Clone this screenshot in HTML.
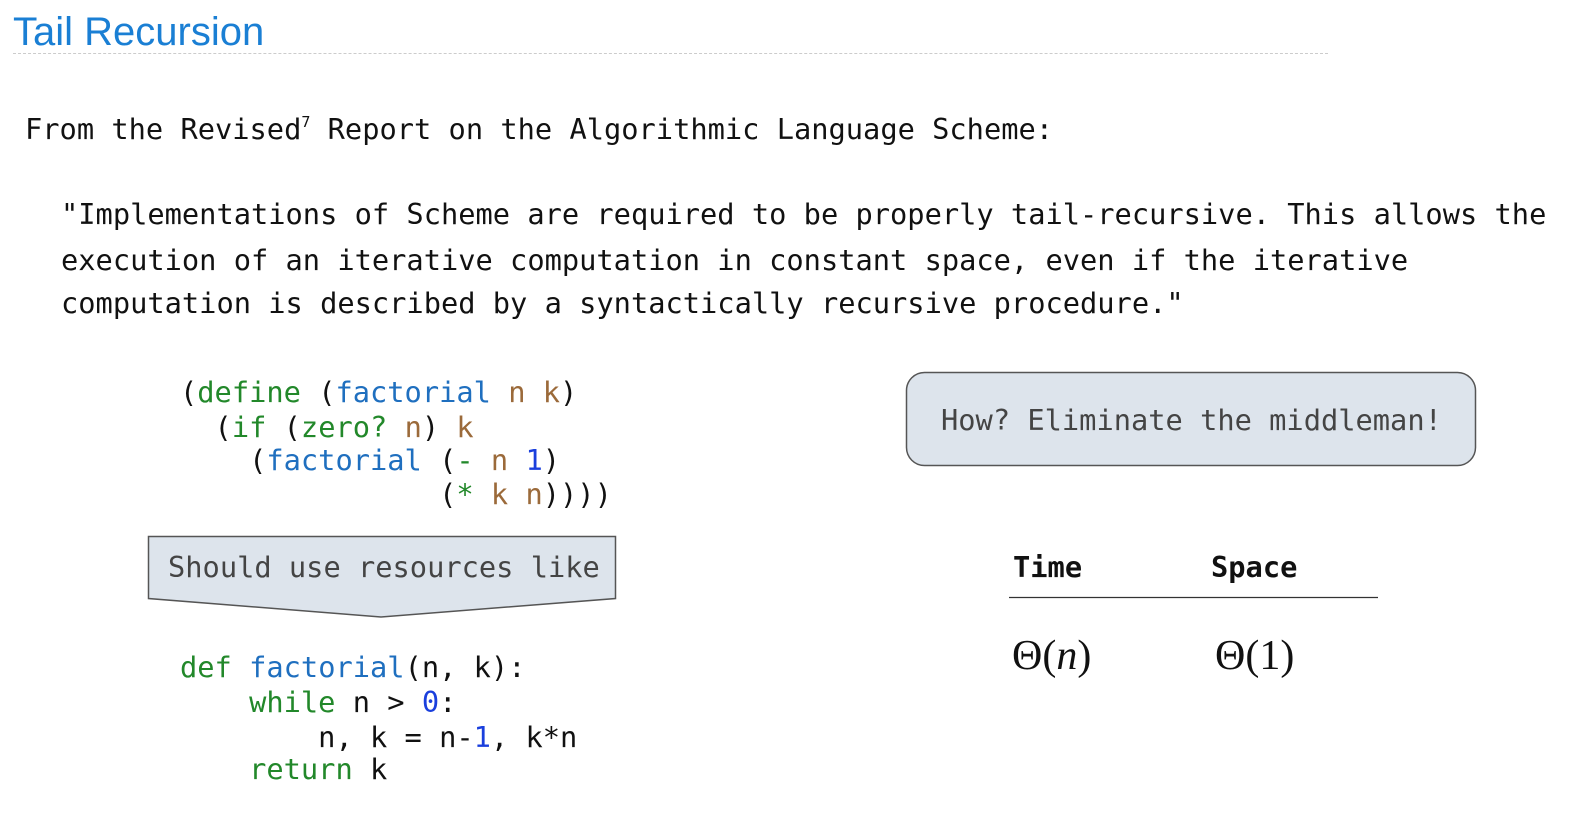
<!DOCTYPE html>
<html><head><meta charset="utf-8"><style>
body{margin:0;width:1582px;height:838px;background:#fff;position:relative;overflow:hidden;font-family:"DejaVu Sans Mono","Liberation Mono",monospace;font-size:28.7px;color:#111}
.l{position:absolute;white-space:pre;line-height:34px;height:34px}
.g{color:#22882a}.b{color:#1f6fbf}.r{color:#9b6a3a}.n{color:#1a3fdd}
.t{position:absolute;left:13px;top:8px;font-family:"Liberation Sans",sans-serif;font-size:40px;color:#1a7fd4;line-height:48px}
.m{position:absolute;font-family:"Liberation Serif","DejaVu Serif",serif;font-size:42px;line-height:44px}
</style></head><body>
<div class="t">Tail Recursion</div>
<div style="position:absolute;left:13px;top:53px;width:1315px;border-top:1px dashed #ccc"></div>
<div class="l" style="left:25px;top:112px">From the Revised<sup style="font-size:15px;vertical-align:12px;line-height:0">7</sup> Report on the Algorithmic Language Scheme:</div>
<div class="l" style="left:61px;top:197px">"Implementations of Scheme are required to be properly tail-recursive. This allows the</div>
<div class="l" style="left:61px;top:243px">execution of an iterative computation in constant space, even if the iterative</div>
<div class="l" style="left:61px;top:286px">computation is described by a syntactically recursive procedure."</div>
<div class="l" style="left:180px;top:375px">(<span class="g">define</span> (<span class="b">factorial</span> <span class="r">n</span> <span class="r">k</span>)</div>
<div class="l" style="left:180px;top:410px">  (<span class="g">if</span> (<span class="g">zero?</span> <span class="r">n</span>) <span class="r">k</span></div>
<div class="l" style="left:180px;top:443px">    (<span class="b">factorial</span> (<span class="g">-</span> <span class="r">n</span> <span class="n">1</span>)</div>
<div class="l" style="left:180px;top:477px">               (<span class="g">*</span> <span class="r">k</span> <span class="r">n</span>))))</div>
<svg style="position:absolute;left:0;top:0" width="1582" height="838">
<polygon points="148.5,536.5 615.5,536.5 615.5,598.5 381,617 148.5,598.5" fill="#dde4ec" stroke="#555" stroke-width="1.5"/>
<rect x="906.5" y="372.5" width="569" height="93" rx="18" fill="#dde4ec" stroke="#555" stroke-width="1.5"/>
<line x1="1009" y1="597.5" x2="1378" y2="597.5" stroke="#333" stroke-width="1.2"/>
</svg>
<div class="l" style="left:168px;top:550px;color:#444">Should use resources like</div>
<div class="l" style="left:941px;top:403px;color:#444">How? Eliminate the middleman!</div>
<div class="l" style="left:1013px;top:550px;font-weight:bold">Time</div>
<div class="l" style="left:1211px;top:550px;font-weight:bold">Space</div>
<div class="m" style="left:1012px;top:634px">Θ(<i>n</i>)</div>
<div class="m" style="left:1215px;top:634px">Θ(1)</div>
<div class="l" style="left:180px;top:650px"><span class="g">def</span> <span class="b">factorial</span>(n, k):</div>
<div class="l" style="left:180px;top:685px">    <span class="g">while</span> n &gt; <span class="n">0</span>:</div>
<div class="l" style="left:180px;top:720px">        n, k = n-<span class="n">1</span>, k*n</div>
<div class="l" style="left:180px;top:752px">    <span class="g">return</span> k</div>
</body></html>
